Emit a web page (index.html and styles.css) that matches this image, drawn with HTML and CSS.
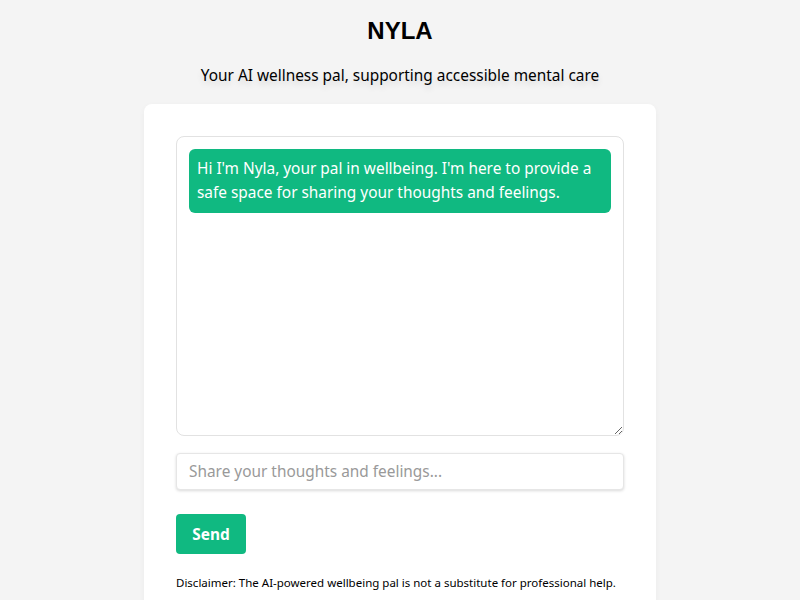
FILE: index.html
```html
<!DOCTYPE html>
<html lang="en">
  <head>
    <meta charset="UTF-8">
    <title>NYLA</title>
    <link rel="stylesheet" href="styles.css">
  </head>
  <body>
    <header class="top">
      <h1 class="title">NYLA</h1>
      <p class="tagline">Your AI wellness pal, supporting accessible mental care</p>
    </header>
    <main class="card">
      <div class="chat-box">
        <div class="message bot">Hi I'm Nyla, your pal in wellbeing. I'm here to provide a safe space for sharing your thoughts and feelings.</div>
      </div>
      <input class="chat-input" type="text" placeholder="Share your thoughts and feelings...">
      <button class="send-btn">Send</button>
      <p class="disclaimer">Disclaimer: The AI-powered wellbeing pal is not a substitute for professional help.</p>
    </main>
  </body>
</html>
```

FILE: styles.css
```css
body {
  margin: 0;
  background-color: #f4f4f4;
  font-family: "Noto Sans", "Open Sans", sans-serif;
  color: #000;
}

.top {
  text-align: center;
  padding-top: 16px;
}

.title {
  font-family: "Liberation Sans", Arial, sans-serif;
  font-size: 24px;
  font-weight: bold;
  margin: 0;
  line-height: 30px;
}

.tagline {
  font-size: 15.4px;
  margin: 20px 0 0;
  line-height: 20px;
  text-shadow: 0 4px 6px rgba(0, 0, 0, 0.12);
}

.card {
  width: 448px;
  margin: 18px auto 0;
  padding: 32px;
  background: #fff;
  border-radius: 8px;
  box-shadow: 0 2px 6px rgba(0, 0, 0, 0.04);
}

.chat-box {
  height: 274px;
  padding: 12px;
  border: 1px solid #e2e2e2;
  border-radius: 8px;
  overflow-y: auto;
  resize: vertical;
}

.message {
  padding: 8px;
  border-radius: 6px;
  font-size: 15.4px;
  line-height: 24px;
}

.bot {
  background-color: #10b981;
  color: #fff;
}

.chat-input {
  display: block;
  box-sizing: border-box;
  width: 100%;
  height: 37px;
  margin-top: 17px;
  padding: 0 12px;
  border: 1px solid #e6e6e6;
  border-radius: 4px;
  box-shadow: 0 1px 3px rgba(0, 0, 0, 0.15);
  font-family: inherit;
  font-size: 15.4px;
}

.chat-input::placeholder {
  color: #999;
}

.send-btn {
  display: block;
  margin-top: 24px;
  width: 70px;
  height: 40px;
  border: none;
  border-radius: 4px;
  background-color: #10b981;
  color: #fff;
  font-family: inherit;
  font-weight: bold;
  font-size: 15.4px;
}

.disclaimer {
  font-size: 11.5px;
  margin: 21px 0 0;
}
```
